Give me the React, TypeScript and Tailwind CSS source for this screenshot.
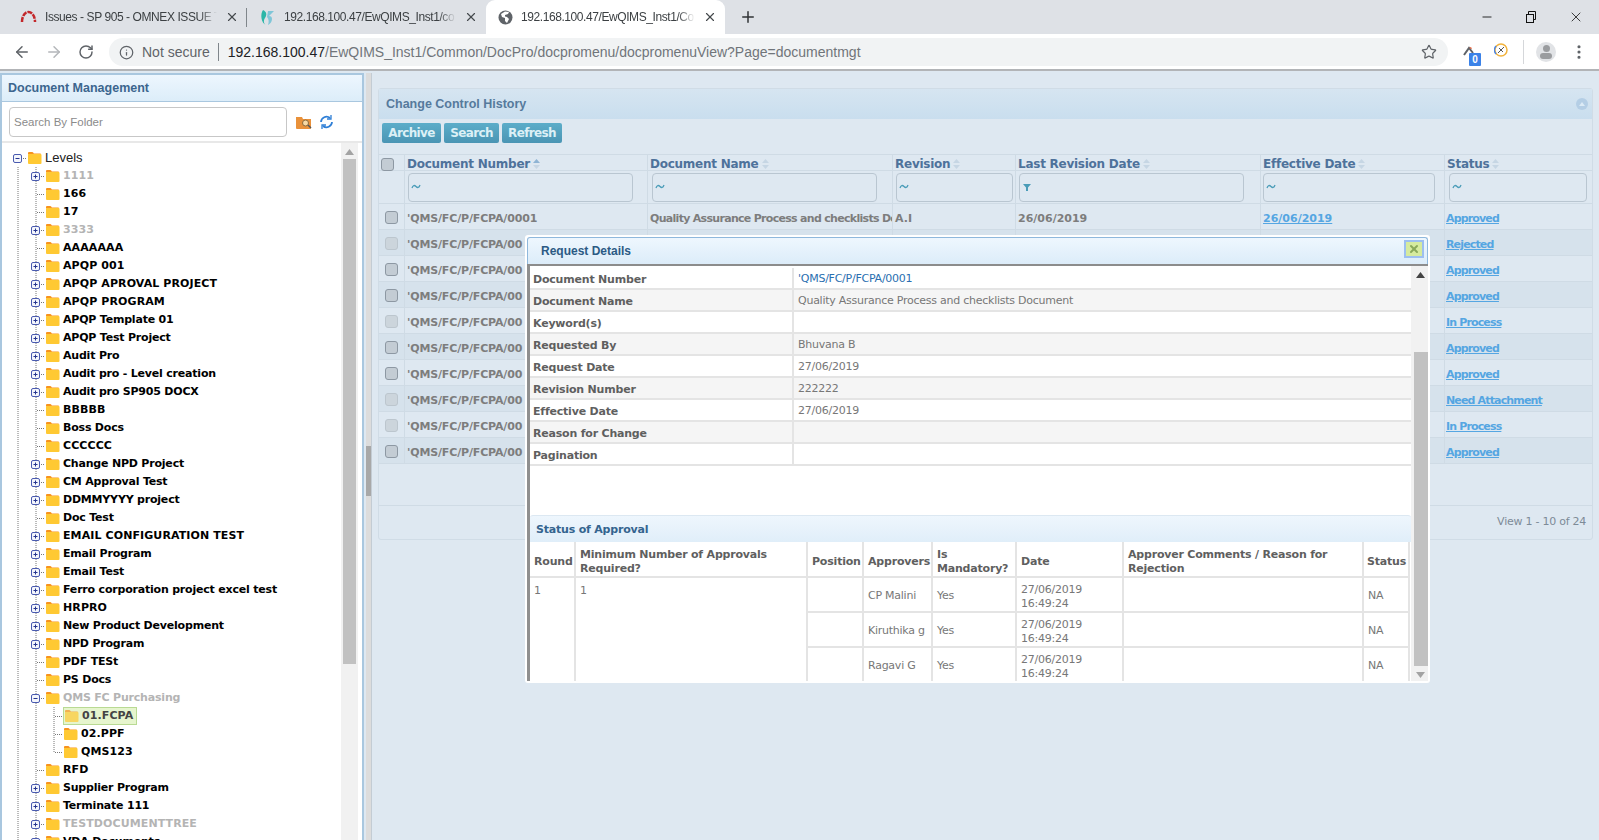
import React from 'react';
import { ArrowLeft, ArrowRight, RotateCw, Info, Star, Plus, X, Minus, MoreVertical } from 'lucide-react';

const dv = "font-['DejaVu_Sans',sans-serif] font-bold";
const bold = `${dv} text-[11px] tracking-[-0.2px]`;
const plain = "font-['DejaVu_Sans',sans-serif] text-[11px] tracking-[-0.25px]";
const arial = "font-['Liberation_Sans',sans-serif]";

type TreeNode = { label: string; toggle?: '+' | '-'; muted?: boolean; depth?: number; selected?: boolean };

const TREE: TreeNode[] = [
  { label: '1111', toggle: '+', muted: true },
  { label: '166' },
  { label: '17' },
  { label: '3333', toggle: '+', muted: true },
  { label: 'AAAAAAA' },
  { label: 'APQP 001', toggle: '+' },
  { label: 'APQP APROVAL PROJECT', toggle: '+' },
  { label: 'APQP PROGRAM', toggle: '+' },
  { label: 'APQP Template 01', toggle: '+' },
  { label: 'APQP Test Project', toggle: '+' },
  { label: 'Audit Pro', toggle: '+' },
  { label: 'Audit pro - Level creation', toggle: '+' },
  { label: 'Audit pro SP905 DOCX', toggle: '+' },
  { label: 'BBBBB' },
  { label: 'Boss Docs' },
  { label: 'CCCCCC' },
  { label: 'Change NPD Project', toggle: '+' },
  { label: 'CM Approval Test', toggle: '+' },
  { label: 'DDMMYYYY project', toggle: '+' },
  { label: 'Doc Test' },
  { label: 'EMAIL CONFIGURATION TEST', toggle: '+' },
  { label: 'Email Program', toggle: '+' },
  { label: 'Email Test', toggle: '+' },
  { label: 'Ferro corporation project excel test', toggle: '+' },
  { label: 'HRPRO', toggle: '+' },
  { label: 'New Product Development', toggle: '+' },
  { label: 'NPD Program', toggle: '+' },
  { label: 'PDF TESt' },
  { label: 'PS Docs' },
  { label: 'QMS FC Purchasing', toggle: '-', muted: true },
  { label: '01.FCPA', depth: 2, selected: true },
  { label: '02.PPF', depth: 2 },
  { label: 'QMS123', depth: 2 },
  { label: 'RFD' },
  { label: 'Supplier Program', toggle: '+' },
  { label: 'Terminate 111', toggle: '+' },
  { label: 'TESTDOCUMENTTREE', toggle: '+', muted: true },
  { label: 'VDA Documents', toggle: '+' },
];

const ROWS = [
  { status: 'Approved', off: false },
  { status: 'Rejected', off: true },
  { status: 'Approved', off: false },
  { status: 'Approved', off: false },
  { status: 'In Process', off: true },
  { status: 'Approved', off: false },
  { status: 'Approved', off: false },
  { status: 'Need Attachment', off: true },
  { status: 'In Process', off: true },
  { status: 'Approved', off: false },
];

const DETAILS: [string, string][] = [
  ['Document Number', "'QMS/FC/P/FCPA/0001"],
  ['Document Name', 'Quality Assurance Process and checklists Document'],
  ['Keyword(s)', ''],
  ['Requested By', 'Bhuvana B'],
  ['Request Date', '27/06/2019'],
  ['Revision Number', '222222'],
  ['Effective Date', '27/06/2019'],
  ['Reason for Change', ''],
  ['Pagination', ''],
];

function Folder({ faded }: { faded?: boolean }) {
  return (
    <svg width="15" height="14" viewBox="0 0 15 14" className={`shrink-0 ${faded ? 'opacity-70' : ''}`}>
      <path d="M1 3.500V2.200C1 1.500 1.500 1 2.200 1h3c.5 0 .8.2 1 .6l.6.9H13c.6 0 1 .4 1 1v.5z" fill="#f7931e" />
      <rect x="1" y="3" width="13.500" height="10" rx="1" fill="#ffc933" />
    </svg>
  );
}

function Guide({ type }: { type: 'line' | 'branch' | 'last' | 'none' }) {
  return (
    <svg width="18" height="18" className="shrink-0">
      {type !== 'none' && (
        <line x1="9" x2="9" y1="0" y2={type === 'last' ? 9 : 18} stroke="#777" strokeDasharray="1 1" />
      )}
      {(type === 'branch' || type === 'last') && (
        <line x1="10" x2="18" y1="9.500" y2="9.500" stroke="#777" strokeDasharray="1 1" />
      )}
    </svg>
  );
}

function Toggle({ sign, through }: { sign: '+' | '-'; through?: boolean }) {
  return (
    <svg width="18" height="18" className="shrink-0">
      {through && <line x1="9" x2="9" y1="0" y2="18" stroke="#777" strokeDasharray="1 1" />}
      <line x1="14" x2="18" y1="9.500" y2="9.500" stroke="#777" strokeDasharray="1 1" />
      <rect x="4.500" y="5.500" width="8" height="8" rx="1.500" fill="#f4f6fc" stroke="#4a5bb0" />
      <line x1="6.500" x2="10.500" y1="9.500" y2="9.500" stroke="#26358f" />
      {sign === '+' && <line x1="8.500" x2="8.500" y1="7.500" y2="11.500" stroke="#26358f" />}
    </svg>
  );
}

function TreeRow({ node }: { node: TreeNode }) {
  const child = node.depth === 2;
  const lastChild = node.label === 'QMS123';
  const hasLower = /[a-z]/.test(node.label);
  return (
    <div className="flex h-[18px] items-center">
      <Guide type="line" />
      {child ? (
        <>
          <Guide type="line" />
          <Guide type={lastChild ? 'last' : 'branch'} />
        </>
      ) : node.toggle ? (
        <Toggle sign={node.toggle} through />
      ) : (
        <Guide type="branch" />
      )}
      <div className={`flex h-[18px] items-center ${node.selected ? 'border border-[#b9da93] bg-[#e6f5ce] pr-[3px]' : ''}`}>
        <Folder faded={node.selected} />
        <span
          className={`${dv} ml-[3px] whitespace-nowrap pt-[1px] text-[11px] ${hasLower ? 'tracking-[-0.2px]' : 'tracking-[0.1px]'} ${
            node.muted ? 'text-[#b4b4b4]' : node.selected ? 'text-[#444]' : 'text-black'
          }`}
        >
          {node.label}
        </span>
      </div>
    </div>
  );
}

function Sort({ active }: { active?: boolean }) {
  return (
    <svg width="9" height="12" viewBox="0 0 9 12" className="ml-[2px] shrink-0">
      <path d="M4.500 1 8 5H1z" fill={active ? '#8fb4d4' : '#c6d6e4'} />
      <path d="M4.500 11 8 7H1z" fill="#c6d6e4" />
    </svg>
  );
}

function Tilde() {
  return (
    <svg width="10" height="8" viewBox="0 0 10 8">
      <path d="M1 5c1-3 2.500-3 4-1.500s3 1.500 4-1.500" fill="none" stroke="#4a9cb8" strokeWidth="1.300" />
    </svg>
  );
}

function Funnel() {
  return (
    <svg width="10" height="9" viewBox="0 0 10 9">
      <path d="M1 1h8L6 4.500V8H4V4.500z" fill="#4a9cb8" />
    </svg>
  );
}

const gridCols = 'grid grid-cols-[26px_243px_245px_123px_245px_184px_149px]';
const line = 'border-r border-[#cfdbe5]';

function ChangeGrid() {
  const heads = ['Document Number', 'Document Name', 'Revision', 'Last Revision Date', 'Effective Date', 'Status'];
  const filterPad = [
    'pl-[3px] pr-[14px]',
    'pl-[4px] pr-[15px]',
    'pl-[3px] pr-[2px]',
    'pl-[3px] pr-[16px]',
    'pl-[2px] pr-[9px]',
    'pl-[4px] pr-[7px]',
  ];
  return (
    <div className="flex-1">
      <div className={`${gridCols} h-[17px] border-y border-[#cfdbe5]`}>
        <div className={`flex items-center pl-[2px] ${line}`}>
          <div className="h-[13px] w-[13px] rounded-[3px] border border-[#8d98a3] bg-[#c3ccd4]" />
        </div>
        {heads.map((h, i) => (
          <div key={h} className={`flex items-center pl-[2px] ${i < 5 ? line : ''}`}>
            <span className={`${dv} text-[12px] tracking-[-0.25px] text-[#4e729b]`}>{h}</span>
            <Sort active={i === 0} />
          </div>
        ))}
      </div>
      <div className={`${gridCols} h-[33px] border-b border-[#cfdbe5]`}>
        <div className={line} />
        {heads.map((h, i) => (
          <div key={h} className={`flex items-center ${filterPad[i]} ${i < 5 ? line : ''}`}>
            <div className="flex h-[29px] w-full items-center rounded-[4px] border border-[#b9c6d1] pl-[2px]">
              {i === 3 ? <Funnel /> : <Tilde />}
            </div>
          </div>
        ))}
      </div>
      {ROWS.map((r, i) => (
        <div key={i} className={`${gridCols} h-[26px] border-b border-[#cfdbe5] ${i % 2 === 1 ? 'bg-[#d6e2ec]' : 'bg-[#dee8f1]'}`}>
          <div className={`flex items-center justify-center pt-[1px] ${line}`}>
            <div className={`h-[13px] w-[13px] rounded-[3px] border ${r.off ? 'border-[#bcc6ce] bg-[#ccd5dc]' : 'border-[#8d98a3] bg-[#c3ccd4]'}`} />
          </div>
          <div className={`${dv} flex items-center whitespace-nowrap pl-[2px] pt-[6px] text-[11px] tracking-[-0.15px] text-[#7d7d7d] ${line}`}>
            {i === 0 ? "'QMS/FC/P/FCPA/0001" : "'QMS/FC/P/FCPA/00"}
          </div>
          <div className={`${dv} flex items-center overflow-hidden whitespace-nowrap pl-[2px] pt-[6px] text-[11px] tracking-[-0.7px] text-[#7d7d7d] ${line}`}>
            {i === 0 ? 'Quality Assurance Process and checklists Document' : ''}
          </div>
          <div className={`${dv} flex items-center pl-[2px] pt-[6px] text-[11px] text-[#7d7d7d] ${line}`}>{i === 0 ? 'A.I' : ''}</div>
          <div className={`${dv} flex items-center pl-[2px] pt-[6px] text-[11px] text-[#7d7d7d] ${line}`}>{i === 0 ? '26/06/2019' : ''}</div>
          <div className={`${dv} flex items-center pl-[2px] pt-[6px] text-[11px] text-[#55a6e2] underline ${line}`}>{i === 0 ? '26/06/2019' : ''}</div>
          <div className={`${dv} flex items-center pl-[1px] pt-[6px] text-[11px] tracking-[-0.85px] text-[#55a6e2] underline`}>{r.status}</div>
        </div>
      ))}
    </div>
  );
}

function TableCell({ className, children }: { className?: string; children?: React.ReactNode }) {
  return <div className={`border-b-2 border-r-2 border-[#e4e4e4] ${className ?? ''}`}>{children}</div>;
}

function ApprovalRow({ name }: { name: string }) {
  const cell = `${plain} flex items-center pl-[4px] pt-[4px] text-[#777]`;
  return (
    <>
      <TableCell className={cell} />
      <TableCell className={cell}>{name}</TableCell>
      <TableCell className={cell}>Yes</TableCell>
      <TableCell className={cell}>
        <span className="leading-[14px]">27/06/2019<br />16:49:24</span>
      </TableCell>
      <TableCell className={cell} />
      <TableCell className={cell}>NA</TableCell>
    </>
  );
}

function RequestDialog() {
  const th = `${bold} flex items-center pt-[6px] leading-[14px] text-[#5f5f5f]`;
  const td = `${plain} row-span-3 pt-[5px] text-[#777]`;
  return (
    <div className="absolute left-[525px] top-[235px] flex h-[448px] w-[905px] flex-col rounded-[3px] bg-white px-[2px] pt-[2px] pb-[2px]">
      <div className="relative flex h-[27px] shrink-0 items-center rounded-t-[3px] border border-b-0 border-[#8fb8dc] bg-gradient-to-b from-[#eef7fe] to-[#dcecf9] pl-[13px]">
        <span className={`${arial} text-[12px] font-bold text-[#2c5a84]`}>Request Details</span>
        <div className="absolute right-[3px] top-[2px] flex h-[18px] w-[20px] items-center justify-center border-2 border-[#9dbff0] bg-[#d6eb9e]">
          <X size={12} strokeWidth={4} className="text-[#8aa95a]" />
        </div>
      </div>
      <div className="h-[2px] shrink-0 bg-[#8c8c8c]" />
      <div className="flex min-h-0 flex-1">
        <div className="w-[3px] shrink-0 bg-[#8f8f8f]" />
        <div className="w-[881px] shrink-0 overflow-hidden">
          <div className="pb-[49px] pt-[2px]">
            {DETAILS.map(([k, v], i) => (
              <div key={k} className={`flex h-[22px] border-b-2 border-[#e4e4e4] ${i % 2 === 1 ? 'bg-[#f5f5f5]' : 'bg-white'}`}>
                <div className={`${bold} flex w-[264px] items-center border-r-2 border-[#e4e4e4] pl-[3px] pt-[5px] text-[#5f5f5f]`}>{k}</div>
                <div className={`${plain} flex items-center pl-[4px] pt-[3px] ${i === 0 ? 'text-[#2a6fb0]' : 'text-[#777]'}`}>{v}</div>
              </div>
            ))}
          </div>
          <div className="flex h-[27px] items-center rounded-t-[3px] border-t border-[#dce8f2] bg-gradient-to-b from-[#eef6fd] to-[#e0eef9] pl-[6px] pt-[2px]">
            <span className={`${bold} text-[#34648f]`}>Status of Approval</span>
          </div>
          <div className="grid grid-cols-[46px_232px_56px_69px_84px_107px_240px_46px] grid-rows-[36px_35px_35px_35px]">
            <TableCell className={`${th} pl-[4px]`}>Round</TableCell>
            <TableCell className={`${th} pl-[4px]`}>Minimum Number of Approvals Required?</TableCell>
            <TableCell className={`${th} pl-[4px]`}>Position</TableCell>
            <TableCell className={`${th} pl-[4px]`}>Approvers</TableCell>
            <TableCell className={`${th} pl-[4px]`}>Is Mandatory?</TableCell>
            <TableCell className={`${th} pl-[4px]`}>Date</TableCell>
            <TableCell className={`${th} pl-[4px]`}>Approver Comments / Reason for Rejection</TableCell>
            <TableCell className={`${th} pl-[3px]`}>Status</TableCell>
            <TableCell className={`${td} pl-[4px]`}>1</TableCell>
            <TableCell className={`${td} pl-[4px]`}>1</TableCell>
            <ApprovalRow name="CP Malini" />
            <ApprovalRow name="Kiruthika g" />
            <ApprovalRow name="Ragavi G" />
          </div>
        </div>
        <div className="flex w-[17px] shrink-0 flex-col items-center bg-[#f1f1f1] pl-[2px]">
          <svg width="9" height="6" viewBox="0 0 9 6" className="mt-[6px]"><path d="M4.500 0 9 6H0z" fill="#444" /></svg>
          <div className="mt-[74px] h-[314px] w-[14px] bg-[#c1c1c1]" />
          <svg width="9" height="6" viewBox="0 0 9 6" className="mt-[6px]"><path d="M4.500 6 9 0H0z" fill="#a3a3a3" /></svg>
        </div>
      </div>
    </div>
  );
}

function Tab({ icon, title, active, showSep }: { icon: React.ReactNode; title: string; active?: boolean; showSep?: boolean }) {
  return (
    <div className={`relative flex h-[34px] w-[239px] shrink-0 items-center pl-[12px] pr-[8px] ${active ? 'rounded-t-[9px] bg-white' : ''}`}>
      {icon}
      <span
        className={`${arial} ml-[8px] min-w-0 flex-1 overflow-hidden whitespace-nowrap text-[12px] tracking-[-0.42px] text-[#3c4043] [mask-image:linear-gradient(90deg,#000_90%,transparent)]`}
      >
        {title}
      </span>
      <X size={14} strokeWidth={2} className="ml-[8px] shrink-0 text-[#45494d]" />
      {showSep && <div className="absolute right-0 top-[8px] h-[19px] w-px bg-[#80868b]" />}
    </div>
  );
}

function BrowserChrome() {
  return (
    <>
      <div className="flex h-[34px] items-center bg-[#dee1e6] pl-[8px]">
        <Tab
          showSep
          title="Issues - SP 905 - OMNEX ISSUE T"
          icon={
            <svg width="17" height="14" viewBox="0 0 17 14" className="shrink-0">
              <path d="M2 12C2 6 5 2 8.500 2S15 6 15 12" fill="none" stroke="#c3272b" strokeWidth="2.500" strokeDasharray="5 1" />
            </svg>
          }
        />
        <Tab
          title="192.168.100.47/EwQIMS_Inst1/co"
          icon={
            <svg width="17" height="17" viewBox="0 0 17 17" className="shrink-0">
              <path d="M4 1c4 2 4 5 2 8s-1 6 1 7C2 14 1 5 4 1z" fill="#2bb6a8" />
              <path d="M9 2h6L10 7c2 0 3 1 3 3 0 3-2 5-4 6 1-3 1-6-1-8z" fill="#7fc6d8" />
            </svg>
          }
        />
        <Tab
          active
          title="192.168.100.47/EwQIMS_Inst1/Co"
          icon={
            <svg width="15" height="15" viewBox="0 0 15 15" className="shrink-0">
              <circle cx="7.500" cy="7.500" r="7" fill="#5f6368" />
              <path d="M7 1.500 3 4l1 3 3 1v3l2 2 2-4-2-2-2-.5V5l3-1 1-2z" fill="#fff" />
            </svg>
          }
        />
        <Plus size={18} strokeWidth={2} className="ml-[14px] text-[#303336]" />
        <div className="flex-1" />
        <div className="flex items-center gap-[30px] pr-[15px] text-[#111]">
          <Minus size={14} strokeWidth={1.500} />
          <svg width="14" height="14" viewBox="0 0 14 14" fill="none" stroke="#111">
            <rect x="2.500" y="4.500" width="7" height="8" />
            <path d="M4.500 4.500v-3h7v8h-2" />
          </svg>
          <X size={16} strokeWidth={1.200} />
        </div>
      </div>
      <div className="flex h-[37px] items-center border-b-2 border-[#b2b4b7] bg-white pt-[1px]">
        <ArrowLeft size={18} strokeWidth={2} className="ml-[13px] text-[#5f6368]" />
        <ArrowRight size={18} strokeWidth={2} className="ml-[14px] text-[#b4b7ba]" />
        <RotateCw size={16} strokeWidth={2.200} className="ml-[15px] text-[#5f6368]" />
        <div className="ml-[15px] flex h-[28px] w-[1339px] items-center rounded-full bg-[#f1f3f4] pl-[10px] pr-[10px]">
          <Info size={15} strokeWidth={2} className="text-[#5f6368]" />
          <span className={`${arial} ml-[8px] text-[14px] text-[#5f6368]`}>Not secure</span>
          <div className="ml-[8px] h-[18px] w-px bg-[#80868b]" />
          <span className={`${arial} ml-[9px] text-[14px] text-[#202124]`}>192.168.100.47</span>
          <span className={`${arial} text-[14px] text-[#70757a]`}>/EwQIMS_Inst1/Common/DocPro/docpromenu/docpromenuView?Page=documentmgt</span>
          <div className="flex-1" />
          <Star size={16} strokeWidth={1.800} className="mr-[1px] text-[#5f6368]" />
        </div>
        <div className="relative ml-[11px] h-[24px] w-[24px]">
          <svg width="14" height="12" viewBox="0 0 14 12" className="mt-[5px] ml-[4px]">
            <path d="M1 10 6 3l4 5" fill="none" stroke="#5f6368" strokeWidth="2" />
            <path d="M6 3l2-1 1 2z" fill="#e8562a" />
          </svg>
          <div className={`${arial} absolute left-[10px] top-[13px] flex h-[13px] w-[12px] items-center justify-center rounded-[1px] bg-[#3b82e8] text-[10px] font-bold text-white`}>0</div>
        </div>
        <svg width="14" height="18" viewBox="0 0 14 18" className="ml-[11px] mb-[2px]">
          <circle cx="7" cy="8" r="6" fill="none" stroke="#f2b33d" strokeWidth="1.500" />
          <path d="M2 12a6 6 0 0 1 0-8" fill="none" stroke="#4a86e8" strokeWidth="1.500" />
          <path d="M4 11l6-6M5 6l4 4" stroke="#555" strokeWidth="1" />
        </svg>
        <div className="ml-[15px] h-[24px] w-px bg-[#d5d7da]" />
        <div className="ml-[12px] flex h-[20px] w-[20px] flex-col items-center justify-center rounded-full bg-[#e1e3e6]">
          <div className="h-[7px] w-[7px] rounded-full bg-[#9a9c9f]" />
          <div className="mt-[1px] h-[6px] w-[12px] rounded-full bg-[#9a9c9f]" />
        </div>
        <MoreVertical size={18} strokeWidth={2.200} className="ml-[14px] text-[#5f6368]" />
      </div>
    </>
  );
}

function LeftPanel() {
  return (
    <div className="flex h-full w-[364px] shrink-0 flex-col border-x-2 border-t-2 border-[#a9c7df] bg-white">
      <div className="flex h-[27px] shrink-0 items-center border-b border-[#a9c7df] bg-gradient-to-b from-[#edf6fe] to-[#dcedf9] pl-[6px]">
        <span className={`${arial} text-[12.500px] font-bold text-[#3c668e]`}>Document Management</span>
      </div>
      <div className="flex h-[41px] shrink-0 items-center border-b-2 border-[#e8e8e8] pl-[7px]">
        <div className={`${arial} flex h-[30px] w-[278px] items-center rounded-[4px] border border-[#c7c7c7] pl-[4px] pt-[2px] text-[11.500px] text-[#8b8b8b]`}>
          Search By Folder
        </div>
        <svg width="16" height="14" viewBox="0 0 16 14" className="ml-[9px]">
          <path d="M0 2h6l1 2h8v9a1 1 0 0 1-1 1H1a1 1 0 0 1-1-1z" fill="#e9913a" />
          <circle cx="9.500" cy="8" r="3" fill="#f6d9a6" stroke="#8a6a3a" />
          <path d="m12 10 3 3" stroke="#555" strokeWidth="1.500" />
        </svg>
        <svg width="15" height="16" viewBox="0 0 15 16" className="ml-[7px]" fill="none" stroke="#2f7fd6" strokeWidth="1.800">
          <path d="M2 8a5.500 5.500 0 0 1 9-4" />
          <path d="M13 8a5.500 5.500 0 0 1-9 4" />
          <path d="M12 1v4H8M3 15v-4h4" strokeWidth="1.300" />
        </svg>
      </div>
      <div className="flex min-h-0 flex-1">
        <div className="min-w-0 flex-1 overflow-hidden pl-[7px] pt-[6px]">
          <div className="flex h-[18px] items-center">
            <Toggle sign="-" />
            <Folder />
            <span className={`${arial} ml-[3px] text-[13px] text-[#222]`}>Levels</span>
          </div>
          {TREE.map(n => (
            <TreeRow key={n.label} node={n} />
          ))}
        </div>
        <div className="flex w-[17px] shrink-0 flex-col items-center bg-[#f1f1f1]">
          <svg width="9" height="6" viewBox="0 0 9 6" className="mt-[6px]"><path d="M4.500 0 9 6H0z" fill="#a3a3a3" /></svg>
          <div className="mt-[4px] h-[505px] w-[13px] bg-[#c1c1c1]" />
        </div>
        <div className="w-[4px] shrink-0" />
      </div>
    </div>
  );
}

export default function App() {
  const btn = `${dv} flex h-[20px] items-center justify-center rounded-[2px] bg-gradient-to-b from-[#5cadc9] to-[#4a95b4] text-[12px] tracking-[-0.65px] text-[#dcf0f6]`;
  return (
    <div className="relative flex h-[840px] w-[1599px] flex-col overflow-hidden bg-[#dee8f1]">
      <BrowserChrome />
      <div className="flex min-h-0 flex-1 pt-[2px]">
        <LeftPanel />
        <div className="w-[2px] shrink-0" />
        <div className="relative w-[6px] shrink-0 border-r border-[#c3ccd4] bg-[#dcdcdc]">
          <div className="absolute inset-x-0 top-[373px] h-[50px] bg-[#a8a8a8]" />
        </div>
        <div className="min-w-0 flex-1 pl-[6px] pt-[15px]">
          <div className="flex h-[452px] w-[1215px] flex-col rounded-[3px] border border-[#d0dce6]">
            <div className="flex h-[30px] shrink-0 items-center bg-gradient-to-b from-[#d6e5f1] to-[#c9deee] pl-[7px] pr-[4px]">
              <span className={`${arial} flex-1 text-[12.500px] font-bold text-[#567a9c]`}>Change Control History</span>
              <div className="flex h-[12px] w-[12px] items-center justify-center rounded-full bg-[#b4cee5]">
                <div className="h-0 w-0 border-x-[3px] border-b-[4px] border-x-transparent border-b-[#dcebf6]" />
              </div>
            </div>
            <div className="flex h-[35px] shrink-0 gap-[3px] pl-[3px] pt-[4px]">
              <div className={`${btn} w-[59px]`}>Archive</div>
              <div className={`${btn} w-[55px]`}>Search</div>
              <div className={`${btn} w-[60px]`}>Refresh</div>
            </div>
            <ChangeGrid />
            <div className={`${plain} flex h-[34px] shrink-0 items-center justify-end border-t border-[#cfdbe5] pr-[6px] text-[#7d8b97]`}>
              View 1 - 10 of 24
            </div>
          </div>
        </div>
      </div>
      <RequestDialog />
    </div>
  );
}
